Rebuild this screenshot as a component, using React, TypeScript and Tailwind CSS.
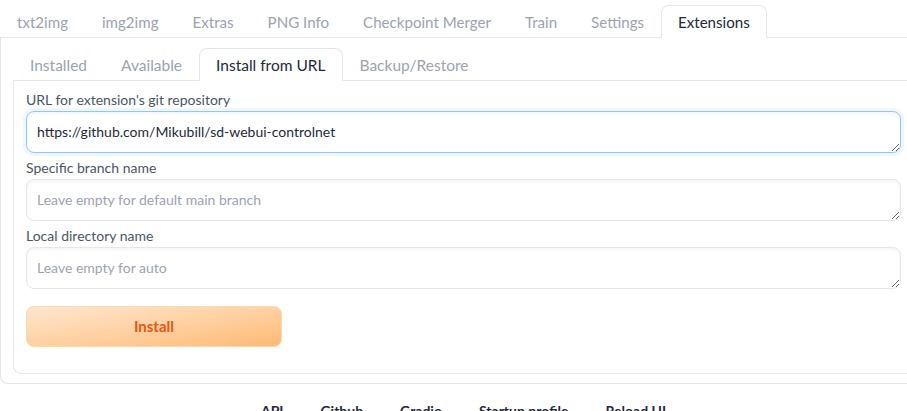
import React from "react";

const topTabs = ["txt2img", "img2img", "Extras", "PNG Info", "Checkpoint Merger", "Train", "Settings", "Extensions"];
const subTabs = ["Installed", "Available", "Install from URL", "Backup/Restore"];
const links = ["API", "Github", "Gradio", "Startup profile", "Reload UI"];

const Field = ({ label, value, placeholder, focused }: { label: string; value?: string; placeholder?: string; focused?: boolean }) => (
  <label className="flex flex-col gap-[1px]">
    <span className="text-[14px] leading-[20px] text-[#4b5563]">{label}</span>
    <textarea
      rows={1}
      defaultValue={value}
      placeholder={placeholder}
      className={`h-[42px] w-full resize-y rounded-[8px] border bg-white px-[10px] py-[10px] text-[14px] leading-[20px] text-[#1f2937] placeholder:text-[#9ca3af] outline-none shadow-[inset_0_2px_3px_rgba(0,0,0,0.04)] ${
        focused ? "border-[#93c5fd] ring-[3px] ring-[#eff6ff]" : "border-[#e5e7eb]"
      }`}
    />
  </label>
);

export default function App() {
  return (
    <div className="h-[411px] w-[907px] overflow-hidden bg-white font-['Lato','Liberation_Sans',sans-serif]">
      <div className="w-[925px]">
        <div className="flex border-b border-[#e5e7eb] pt-[5px]">
          {topTabs.map((t) => (
            <div
              key={t}
              className={`-mb-px rounded-t-[8px] border px-4 pt-[6px] pb-[5px] text-[15.1px] leading-[20px] ${
                t === "Extensions" ? "border-[#e5e7eb] border-b-white bg-white text-[#1f2937]" : "border-transparent text-[#9ca3af]"
              }`}
            >
              {t}
            </div>
          ))}
        </div>
        <div className="rounded-bl-[8px] border-b border-l border-[#e5e7eb] px-3 pt-[10px] pb-[9px]">
          <div className="flex border-b border-[#e5e7eb]">
            {subTabs.map((t) => (
              <div
                key={t}
                className={`-mb-px rounded-t-[8px] border px-4 pt-[6px] pb-[5px] text-[15.5px] leading-[20px] ${
                  t === "Install from URL" ? "border-[#e5e7eb] border-b-white bg-white text-[#1f2937]" : "border-transparent text-[#9ca3af]"
                }`}
              >
                {t}
              </div>
            ))}
          </div>
          <div className="flex flex-col gap-[5px] rounded-bl-[8px] border-b border-l border-[#e5e7eb] px-3 pt-[9px] pb-[26px]">
            <Field label="URL for extension's git repository" value="https://github.com/Mikubill/sd-webui-controlnet" focused />
            <Field label="Specific branch name" placeholder="Leave empty for default main branch" />
            <Field label="Local directory name" placeholder="Leave empty for auto" />
            <button className="mt-[12px] h-[41px] w-[256px] rounded-[8px] border border-[#fed7aa] bg-gradient-to-br from-[#ffe7cf] to-[#fdba74] text-[15px] font-bold text-[#ea580c]">
              Install
            </button>
          </div>
        </div>
      </div>
      <div className="flex w-[907px] justify-center gap-[37px] pl-[20px] pt-[17px] text-[14px] leading-[20px] font-bold text-[#1f2937]">
        {links.map((l) => (
          <span key={l}>{l}</span>
        ))}
      </div>
    </div>
  );
}
